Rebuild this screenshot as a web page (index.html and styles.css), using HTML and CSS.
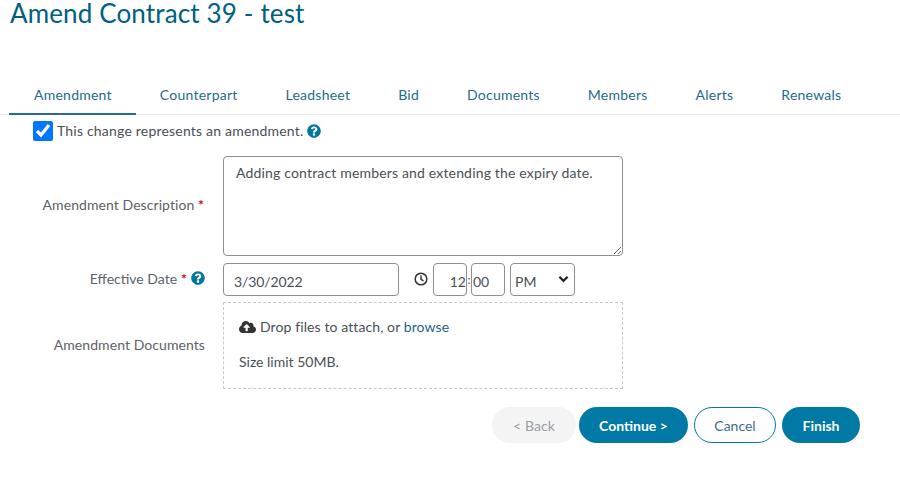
FILE: index.html
```html
<!DOCTYPE html>
<html lang="en">
<head>
<meta charset="utf-8">
<title>Amend Contract 39 - test</title>
<link rel="stylesheet" href="styles.css">
</head>
<body>
<h1 class="title">Amend Contract 39 - test</h1>
<nav class="tabs">
  <a class="tab active">Amendment</a>
  <a class="tab">Counterpart</a>
  <a class="tab">Leadsheet</a>
  <a class="tab">Bid</a>
  <a class="tab">Documents</a>
  <a class="tab">Members</a>
  <a class="tab">Alerts</a>
  <a class="tab">Renewals</a>
</nav>
<div class="check-row">
  <input class="check" type="checkbox" checked>
  <span>This change represents an amendment.</span>
  <svg class="help" viewBox="0 0 512 512"><path d="M504 256c0 137-111 248-248 248S8 393 8 256 119 8 256 8s248 111 248 248zM262.700 90c-54.500 0-89.300 23-116.500 63.800-3.500 5.300-2.400 12.400 2.700 16.300l34.700 26.300c5.200 3.900 12.600 3 16.700-2.100 17.900-22.700 30.100-35.800 57.300-35.800 20.400 0 45.700 13.100 45.700 33 0 15-12.400 22.700-32.600 34-23.600 13.200-54.800 29.700-54.800 70.900V300c0 6.600 5.400 12 12 12h56c6.600 0 12-5.400 12-12v-1.300c0-28.600 83.500-29.700 83.500-107C378.400 133.600 318 90 262.700 90zM256 339c-25.500 0-46.200 20.700-46.200 46.200 0 25.500 20.700 46.200 46.200 46.200s46.200-20.700 46.200-46.200c0-25.500-20.700-46.200-46.200-46.200z"/></svg>
</div>
<form class="form">
  <label class="label label-desc">Amendment Description <span class="req">*</span></label>
  <textarea class="control desc">Adding contract members and extending the expiry date.</textarea>

  <label class="label label-date">Effective Date <span class="req">*</span>
    <svg class="help" viewBox="0 0 512 512"><path d="M504 256c0 137-111 248-248 248S8 393 8 256 119 8 256 8s248 111 248 248zM262.700 90c-54.500 0-89.300 23-116.500 63.800-3.500 5.300-2.400 12.400 2.700 16.300l34.700 26.300c5.200 3.900 12.600 3 16.700-2.100 17.900-22.700 30.100-35.800 57.300-35.800 20.400 0 45.700 13.100 45.700 33 0 15-12.400 22.700-32.600 34-23.600 13.200-54.800 29.700-54.800 70.900V300c0 6.600 5.400 12 12 12h56c6.600 0 12-5.400 12-12v-1.300c0-28.600 83.500-29.700 83.500-107C378.400 133.600 318 90 262.700 90zM256 339c-25.500 0-46.200 20.700-46.200 46.200 0 25.500 20.700 46.200 46.200 46.200s46.200-20.700 46.200-46.200c0-25.500-20.700-46.200-46.200-46.200z"/></svg>
  </label>
  <div class="date-row">
    <input class="control date" type="text" value="3/30/2022">
    <svg class="clock" viewBox="0 0 16 16"><circle cx="8" cy="8" r="6.700" fill="none" stroke="#333" stroke-width="1.700"/><path d="M8 4v4.400l2.900 1.800" fill="none" stroke="#333" stroke-width="1.600"/></svg>
    <input class="control time hour" type="text" value="12">
    <span class="colon">:</span>
    <input class="control time minute" type="text" value="00">
    <div class="control ampm">PM
      <svg class="chev" viewBox="0 0 12 8"><path d="M1.500 1.500 6 6l4.500-4.500" fill="none" stroke="#222" stroke-width="2.400"/></svg>
    </div>
  </div>

  <label class="label label-docs">Amendment Documents</label>
  <div class="drop">
    <div class="drop-line">
      <svg class="cloud" viewBox="0 0 640 512"><path fill="#333" d="M537.600 226.600c4.100-10.700 6.400-22.400 6.400-34.600 0-53-43-96-96-96-19.700 0-38.100 6-53.300 16.200C367 64.200 315.300 32 256 32c-88.400 0-160 71.600-160 160 0 2.700.1 5.400.2 8.100C40.200 219.800 0 273.200 0 336c0 79.500 64.500 144 144 144h368c70.700 0 128-57.300 128-128 0-61.900-44-113.600-102.400-125.400zM393.400 288H328v112c0 8.800-7.200 16-16 16h-48c-8.800 0-16-7.200-16-16V288h-65.400c-14.300 0-21.400-17.200-11.300-27.300l105.400-105.400c6.200-6.200 16.400-6.200 22.600 0l105.400 105.400c10.100 10.100 2.900 27.300-11.300 27.300z"/></svg>
      <span class="drop-text">Drop files to attach, or <a class="browse">browse</a></span>
    </div>
    <div class="drop-note">Size limit 50MB.</div>
  </div>
</form>
<div class="actions">
  <button class="btn btn-muted" type="button">&lt; Back</button>
  <button class="btn btn-primary" type="button">Continue &gt;</button>
  <button class="btn btn-outline" type="button">Cancel</button>
  <button class="btn btn-primary finish" type="button">Finish</button>
</div>
</body>
</html>
```
FILE: styles.css
```css
* { box-sizing: border-box; }
html, body { margin: 0; padding: 0; }
body {
  width: 900px;
  height: 486px;
  overflow: hidden;
  background: #fff;
  color: #495057;
  font-family: "Lato", "Noto Sans", sans-serif;
  font-size: 14px;
  line-height: 21px;
}
.title {
  margin: 0;
  padding-left: 10px;
  height: 28px;
  font-size: 26px;
  line-height: 26px;
  font-weight: 400;
  color: #00607f;
  letter-spacing: .14px;
}
.tabs {
  display: flex;
  margin-top: 52px;
  padding-left: 9px;
  height: 35px;
  border-bottom: 1px solid #e9ecef;
}
.tab {
  padding: 4px 24px 0;
  height: 35px;
  color: #1f6a8f;
  white-space: nowrap;
  letter-spacing: .24px;
}
.active { padding-left: 25px; border-bottom: 2px solid #2a6a9a; }
.check-row {
  display: flex;
  align-items: center;
  height: 21px;
  margin-top: 5px;
  padding-left: 33px;
  letter-spacing: .2px;
}
.check { width: 20px; height: 20px; margin: 1px 4px 0 0; accent-color: #0075ff; }
.help { width: 14px; height: 14px; fill: #00779f; margin-left: 4px; flex: none; }
.form {
  display: grid;
  grid-template-columns: 205px 400px;
  column-gap: 18px;
  margin-top: 15px;
  row-gap: 7px;
}
.label { text-align: right; color: #5b6269; white-space: nowrap; letter-spacing: .07px; }
.label-desc { padding-top: 38px; padding-right: 1px; }
.label-date { padding-top: 6px; display: flex; justify-content: flex-end; align-items: center; height: 24px; gap: 4px; letter-spacing: 0; }
.label-date .help { margin-left: 0; }
.label-docs { padding-top: 31px; }
.req { color: #d0021b; font-weight: 700; }
.control {
  border: 1px solid #8f8f8f;
  border-radius: 4px;
  background: #fff;
  color: #495057;
  font: inherit;
  outline: none;
}
.desc {
  display: block;
  width: 400px;
  height: 100px;
  padding: 5px 12px;
  resize: both;
  letter-spacing: .17px;
}
.date-row { display: flex; align-items: center; height: 33px; }
.date { width: 176px; height: 33px; padding: 4px 10px 0; letter-spacing: -.1px; }
.clock { width: 14px; height: 14px; margin: -2px 5px 0 15px; flex: none; }
.time { width: 34px; height: 33px; padding: 4px 0 0; }
.hour { text-align: right; }
.minute { text-align: left; padding-left: 1px; }
.colon { width: 4px; text-align: center; font-size: 12px; }
.ampm {
  display: flex;
  justify-content: space-between;
  align-items: center;
  width: 65px;
  height: 33px;
  margin-left: 5px;
  padding: 4px 5px 0 4px;
}
.chev { width: 11px; height: 8px; margin-top: -6px; }
.drop {
  width: 400px;
  height: 87px;
  margin-top: -1px;
  border: 1px dashed #c9c9c9;
  padding: 13px 15px;
}
.drop-line { display: flex; align-items: center; gap: 4px; }
.drop-text { letter-spacing: .1px; }
.cloud { width: 17px; height: 14px; }
.browse { color: #1f5f8f; }
.drop-note { margin-top: 14px; }
.actions {
  display: flex;
  justify-content: flex-end;
  gap: 6px;
  width: 860px;
  margin-top: 18px;
}
.btn {
  height: 36px;
  border-radius: 18px;
  border: 1px solid transparent;
  font: inherit;
  padding: 0;
}
.btn-muted { width: 84px; margin-right: -3px; background: #f4f4f5; color: #9a9ca5; letter-spacing: .1px; }
.btn-primary { width: 109px; background: #0079a5; color: #fff; font-weight: 700; }
.btn-outline { width: 82px; background: #fff; border-color: #0079a5; color: #3d6f8f; }
.finish { width: 78px; }
```
